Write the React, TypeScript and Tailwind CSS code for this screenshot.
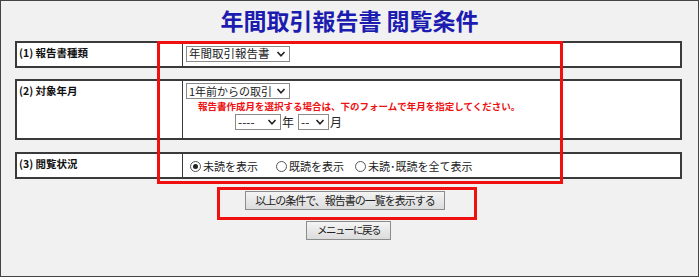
import React from "react";

const JP = '"Noto Sans CJK JP", "Noto Sans", sans-serif';

function Chevron() {
  return (
    <svg width="10" height="8" viewBox="0 0 10 8" className="shrink-0">
      <path d="M1.5 2 L5 5.8 L8.5 2" fill="none" stroke="#222" strokeWidth="1.6" />
    </svg>
  );
}

function FakeSelect({ text, w, tc }: { text: string; w: string; tc: string }) {
  return (
    <div
      className={`${w} h-[16px] flex items-center justify-between whitespace-nowrap border border-[#8a8a8a] bg-white pl-[2px] pr-[3px] leading-none text-[#222]`}
    >
      <span className={tc}>{text}</span>
      <Chevron />
    </div>
  );
}

function Radio({ checked, label, ml }: { checked?: boolean; label: string; ml: string }) {
  return (
    <div className={`flex items-center gap-[2px] ${ml}`}>
      <span className="w-[11px] h-[11px] rounded-full border border-[#555] bg-white flex items-center justify-center">
        {checked && <span className="w-[5px] h-[5px] rounded-full bg-[#222]" />}
      </span>
      <span className="whitespace-nowrap text-[11px] leading-none text-[#222]">{label}</span>
    </div>
  );
}

function Row({
  label,
  h,
  children,
}: {
  label: string;
  h: string;
  children: React.ReactNode;
}) {
  return (
    <div className={`flex ${h} border-2 border-[#3a3a3a] bg-white`}>
      <div className="w-[166px] shrink-0 border-r border-[#3a3a3a] pl-[2px] pt-[3px] whitespace-nowrap text-[10.5px] font-bold leading-[14px] text-[#111]">
        {label}
      </div>
      <div className="flex-1 pl-[3px]">{children}</div>
    </div>
  );
}

export default function App() {
  return (
    <div
      className="relative w-[699px] h-[277px] overflow-hidden border border-[#444] bg-[#f1f1f1]"
      style={{ fontFamily: JP }}
    >
      <h1 className="h-[40px] pt-[6px] text-center text-[23px] font-bold leading-[27px] text-[#1c1cb0]">
        年間取引報告書 閲覧条件
      </h1>

      <div className="ml-[14px] w-[667px] flex flex-col">
        <Row label="(1) 報告書種類" h="h-[27px]">
          <div className="pt-[3px]">
            <FakeSelect text="年間取引報告書" w="w-[104px]" tc="text-[11.5px]" />
          </div>
        </Row>

        <div className="h-[11px]" />

        <Row label="(2) 対象年月" h="h-[61px]">
          <div className="pt-[2px] flex flex-col">
            <FakeSelect text="1年前からの取引" w="w-[104px]" tc="text-[11px]" />
            <div className="pl-[12px] pt-[1px] whitespace-nowrap text-[9.5px] font-bold leading-[12px] text-[#ee1111]">
              報告書作成月を選択する場合は、下のフォームで年月を指定してください。
            </div>
            <div className="pl-[49px] pt-[2px] flex items-center text-[12px] leading-none text-[#222]">
              <FakeSelect text="----" w="w-[46px]" tc="text-[12px]" />
              <span className="ml-[1px]">年</span>
              <span className="ml-[4px]">
                <FakeSelect text="--" w="w-[31px]" tc="text-[12px]" />
              </span>
              <span className="ml-[1px]">月</span>
            </div>
          </div>
        </Row>

        <div className="h-[12px]" />

        <Row label="(3) 閲覧状況" h="h-[27px]">
          <div className="h-full flex items-center pl-[4px] pt-[1px]">
            <Radio checked label="未読を表示" ml="ml-0" />
            <Radio label="既読を表示" ml="ml-[18px]" />
            <Radio label="未読･既読を全て表示" ml="ml-[11px]" />
          </div>
        </Row>

        <div className="mt-[12px] flex justify-center pr-[7px]">
          <button className="w-[200px] h-[19px] whitespace-nowrap border border-[#8c8c8c] bg-gradient-to-b from-[#f4f4f4] to-[#dcdcdc] text-[11px] tracking-[-1px] leading-none text-[#222]">
            以上の条件で、報告書の一覧を表示する
          </button>
        </div>

        <div className="mt-[11px] flex justify-center">
          <button className="w-[85px] h-[19px] whitespace-nowrap border border-[#8c8c8c] bg-gradient-to-b from-[#f4f4f4] to-[#dcdcdc] text-[10.5px] tracking-[-1.5px] leading-none text-[#222]">
            メニューに戻る
          </button>
        </div>
      </div>

      {/* annotation highlights */}
      <div className="absolute left-[156px] top-[40px] w-[406px] h-[143px] border-[3px] border-[#f01010]" />
      <div className="absolute left-[216px] top-[186px] w-[260px] h-[33px] border-[3px] border-[#f01010]" />
    </div>
  );
}
